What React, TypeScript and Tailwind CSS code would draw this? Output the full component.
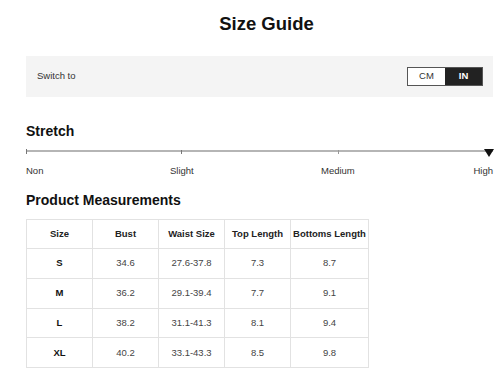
const rows = [
  { size: "S", bust: "34.6", waist: "27.6-37.8", top: "7.3", bottom: "8.7" },
  { size: "M", bust: "36.2", waist: "29.1-39.4", top: "7.7", bottom: "9.1" },
  { size: "L", bust: "38.2", waist: "31.1-41.3", top: "8.1", bottom: "9.4" },
  { size: "XL", bust: "40.2", waist: "33.1-43.3", top: "8.5", bottom: "9.8" },
];

const cols = ["w-[66px]", "w-[66px]", "w-[66px]", "w-[66px]", "w-[78px]"];

function Stretch() {
  return (
    <div className="mt-[9px]">
      <div className="relative h-[10px]">
        <div className="absolute left-0 right-0 top-[1px] h-[2px] bg-[#b5b5b5]" />
        <div className="absolute left-0 top-0 h-[5px] w-[1px] bg-[#777]" />
        <div className="absolute left-[155px] top-[1px] h-[4px] w-[1px] bg-[#777]" />
        <div className="absolute left-[312px] top-[1px] h-[4px] w-[1px] bg-[#999]" />
        <svg className="absolute right-[-1px] top-[0px]" width="10" height="8" viewBox="0 0 10 8">
          <polygon points="0,0 10,0 5,8" fill="#111" />
        </svg>
      </div>
      <div className="relative mt-[5px] h-[14px] text-[9.5px] text-[#333]">
        <span className="absolute left-0">Non</span>
        <span className="absolute left-[144px]">Slight</span>
        <span className="absolute left-[295px]">Medium</span>
        <span className="absolute right-0">High</span>
      </div>
    </div>
  );
}

export default function App() {
  return (
    <div className="h-[379px] w-[500px] overflow-hidden bg-white pl-[26px] pr-[7px] font-['Liberation_Sans',Arial,sans-serif] text-[#111]">
      <h1 className="pt-[13px] pl-[32px] text-center text-[18.5px] font-bold leading-[22px]">
        <span className="ml-[-18px]">Size Guide</span>
      </h1>
      <div className="mt-[21px] flex h-[41px] items-center justify-between bg-[#f4f4f4] pl-[11px] pr-[10px]">
        <span className="text-[9.5px] text-[#333]">Switch to</span>
        <div className="flex h-[19px] border border-[#555] text-[9.5px]">
          <div className="flex w-[37px] items-center justify-center bg-white text-[#333]">CM</div>
          <div className="flex w-[37px] items-center justify-center bg-[#222] font-bold text-white">IN</div>
        </div>
      </div>
      <h2 className="mt-[26px] text-[14px] font-bold leading-[17px]">Stretch</h2>
      <Stretch />
      <h2 className="mt-[14px] text-[14px] font-bold leading-[17px]">Product Measurements</h2>
      <table className="mt-[10px] border-collapse text-[9.5px]">
        <thead>
          <tr className="h-[29px]">
            {["Size", "Bust", "Waist Size", "Top Length", "Bottoms Length"].map((h, i) => (
              <th key={h} className={`${cols[i]} border border-[#e2e2e2] p-0 text-center font-bold text-[#222]`}>
                {h}
              </th>
            ))}
          </tr>
        </thead>
        <tbody>
          {rows.map((r) => (
            <tr key={r.size} className="h-[29.75px]">
              <td className="border border-[#e2e2e2] text-center font-bold text-[#111]">{r.size}</td>
              <td className="border border-[#e2e2e2] text-center text-[#444]">{r.bust}</td>
              <td className="border border-[#e2e2e2] text-center text-[#444]">{r.waist}</td>
              <td className="border border-[#e2e2e2] text-center text-[#444]">{r.top}</td>
              <td className="border border-[#e2e2e2] text-center text-[#444]">{r.bottom}</td>
            </tr>
          ))}
        </tbody>
      </table>
    </div>
  );
}
